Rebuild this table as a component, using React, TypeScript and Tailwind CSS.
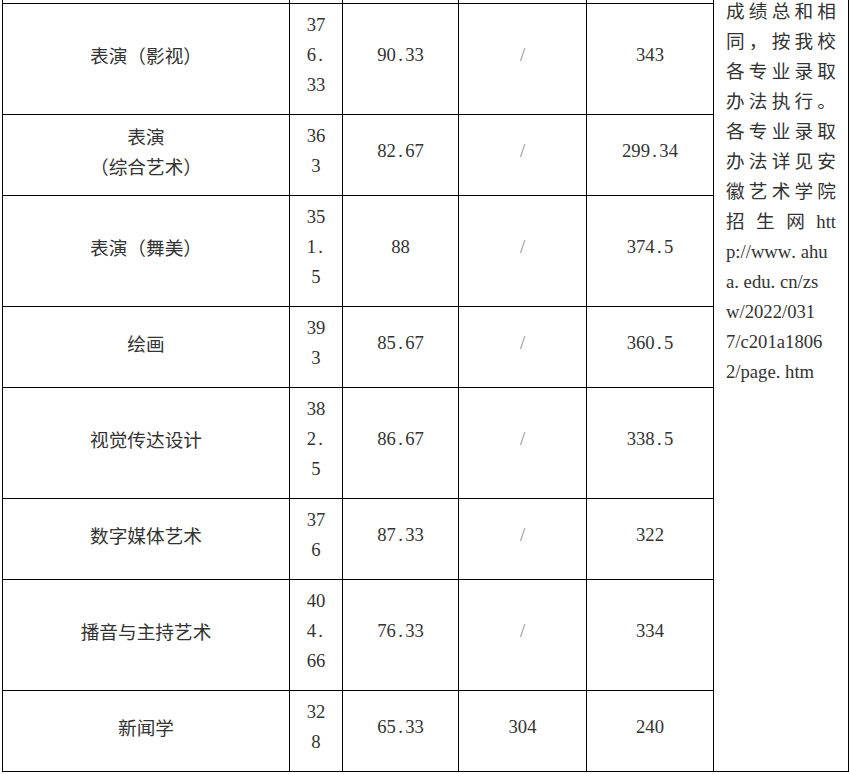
const rows = [
  { name: ["表演（影视）"], a: ["37", "6.", "33"], b: "90.33", c: "/", d: "343" },
  { name: ["表演", "（综合艺术）"], a: ["36", "3"], b: "82.67", c: "/", d: "299.34" },
  { name: ["表演（舞美）"], a: ["35", "1.", "5"], b: "88", c: "/", d: "374.5" },
  { name: ["绘画"], a: ["39", "3"], b: "85.67", c: "/", d: "360.5" },
  { name: ["视觉传达设计"], a: ["38", "2.", "5"], b: "86.67", c: "/", d: "338.5" },
  { name: ["数字媒体艺术"], a: ["37", "6"], b: "87.33", c: "/", d: "322" },
  { name: ["播音与主持艺术"], a: ["40", "4.", "66"], b: "76.33", c: "/", d: "334" },
  { name: ["新闻学"], a: ["32", "8"], b: "65.33", c: "304", d: "240" },
];

const note = [
  { t: "成绩总和相", j: true },
  { t: "同，按我校", j: true },
  { t: "各专业录取", j: true },
  { t: "办法执行。", j: true },
  { t: "各专业录取", j: true },
  { t: "办法详见安", j: true },
  { t: "徽艺术学院", j: true },
  { t: "招 生 网 htt", j: true },
  { t: "p://www.ahu", j: false },
  { t: "a.edu.cn/zs", j: false },
  { t: "w/2022/031", j: false },
  { t: "7/c201a1806", j: false },
  { t: "2/page.htm", j: false },
];

// SimSun-style half-width period: give the dot a full half-em cell
function Num({ v }: { v: string }) {
  const parts = v.split(".");
  return (
    <>
      {parts.map((p, i) => (
        <span key={i}>
          {p}
          {i < parts.length - 1 && <span className="inline-block w-[0.5em]">.</span>}
        </span>
      ))}
    </>
  );
}

const cell = "border border-black text-center align-middle pt-[6px] pb-[14px] leading-[30px]";
const serif = "font-['Liberation_Serif',serif]";

export default function App() {
  return (
    <div className="h-[774px] w-[850px] overflow-hidden bg-white text-[18.667px] text-[#333] font-['Noto_Sans_CJK_SC',sans-serif]">
      <table className="ml-[2px] -mt-[37px] w-[846px] table-fixed border-collapse">
        <colgroup>
          <col className="w-[287px]" />
          <col className="w-[53px]" />
          <col className="w-[116px]" />
          <col className="w-[128px]" />
          <col className="w-[127px]" />
          <col className="w-[135px]" />
        </colgroup>
        <tbody>
          {/* row above the visible area */}
          <tr className="h-[40px]">
            <td className="border border-black"></td>
            <td className="border border-black"></td>
            <td className="border border-black"></td>
            <td className="border border-black"></td>
            <td className="border border-black"></td>
            <td
              rowSpan={9}
              className="border border-black align-top px-[12px] pt-[31px] leading-[30px]"
            >
              {note.map((n, i) => (
                <div
                  key={i}
                  className={
                    n.j
                      ? "text-justify [text-align-last:justify] whitespace-nowrap"
                      : `${serif} whitespace-nowrap`
                  }
                >
                  {n.j && n.t.includes("htt") ? (
                    <>
                      招 生 网 <span className={serif}>htt</span>
                    </>
                  ) : n.j ? (
                    n.t
                  ) : (
                    <Num v={n.t} />
                  )}
                </div>
              ))}
            </td>
          </tr>
          {rows.map((r, i) => (
            <tr key={i}>
              <td className={cell}>
                {r.name.map((l, k) => (
                  <div key={k}>{l}</div>
                ))}
              </td>
              <td className={`${cell} ${serif}`}>
                {r.a.map((l, k) => (
                  <div key={k}>
                    <Num v={l} />
                  </div>
                ))}
              </td>
              <td className={`${cell} ${serif}`}>
                <Num v={r.b} />
              </td>
              <td className={`${cell} ${serif} ${r.c === "/" ? "text-[#888]" : ""}`}>{r.c}</td>
              <td className={`${cell} ${serif}`}>
                <Num v={r.d} />
              </td>
            </tr>
          ))}
        </tbody>
      </table>
    </div>
  );
}
